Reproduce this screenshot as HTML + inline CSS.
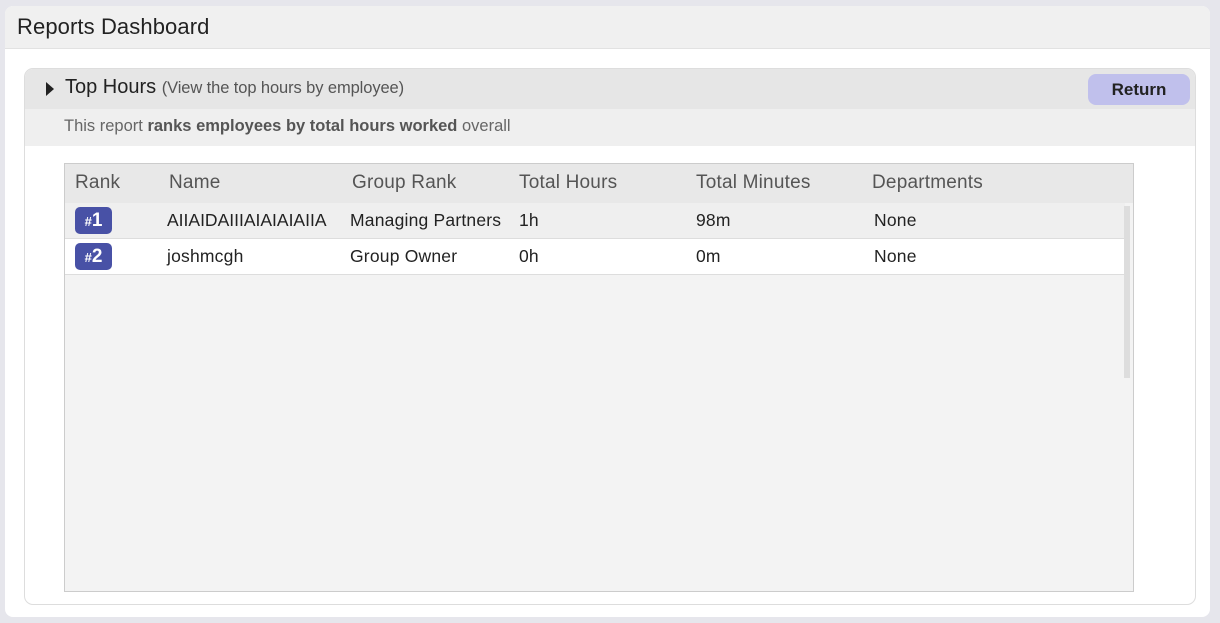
<!DOCTYPE html>
<html><head><style>
body{margin:0;width:1220px;height:623px;background:#e6e6ec;font-family:"Liberation Sans",sans-serif;position:relative;overflow:hidden}
div{box-sizing:border-box;position:absolute}
.t{white-space:nowrap}
.h{font-size:19px;color:#555;top:172px;letter-spacing:0.2px}
.d{font-size:17.5px;color:#222;letter-spacing:0.2px}
</style></head><body>
<div style="left:5px;top:6px;width:1205px;height:611px;background:#fff;border-radius:8px"></div>
<div style="left:5px;top:6px;width:1205px;height:43px;background:#f0f0f0;border-radius:8px 8px 0 0;border-bottom:1px solid #e2e2e2"></div>
<div class="t" style="left:17px;top:14px;font-size:22px;color:#222;letter-spacing:0.1px">Reports Dashboard</div>
<div style="left:24px;top:68px;width:1172px;height:537px;border:1px solid #ddd;border-radius:9px;background:#fff;overflow:hidden">
 <div style="left:0;top:0;width:1172px;height:40px;background:#e6e6e6"></div>
 <div style="left:0;top:40px;width:1172px;height:37px;background:#efefef"></div>
</div>
<svg style="position:absolute;left:45px;top:81px" width="10" height="16"><path d="M1 1 L9 8 L1 15Z" fill="#222"/></svg>
<div class="t" style="left:65px;top:76px;font-size:20px;color:#222">Top Hours <span style="font-size:16.5px;color:#555;letter-spacing:-0.1px">(View the top hours by employee)</span></div>
<div class="t" style="left:1088px;top:74px;width:102px;height:31px;background:#c0c0ec;border-radius:8px;text-align:center;line-height:31px;font-size:17px;color:#222;font-weight:bold">Return</div>
<div class="t" style="left:64px;top:117px;font-size:16.5px;color:#666;letter-spacing:0px">This report <b style="color:#555">ranks employees by total hours worked</b> overall</div>
<div style="left:64px;top:163px;width:1070px;height:429px;border:1px solid #ccc;background:#f3f3f3">
 <div style="left:0;top:0;width:1068px;height:39px;background:#e8e8e8"></div>
 <div style="left:0;top:39px;width:1060px;height:36px;background:#efefef;border-bottom:1px solid #ddd"></div>
 <div style="left:0;top:75px;width:1060px;height:36px;background:#fff;border-bottom:1px solid #ddd"></div>
 <div style="left:1059px;top:42px;width:6px;height:172px;background:#ddd"></div>
</div>
<div class="t h" style="left:75px">Rank</div>
<div class="t h" style="left:169px">Name</div>
<div class="t h" style="left:352px">Group Rank</div>
<div class="t h" style="left:519px">Total Hours</div>
<div class="t h" style="left:696px">Total Minutes</div>
<div class="t h" style="left:872px">Departments</div>
<div class="t" style="left:75px;top:207px;width:37px;height:27px;background:#4851a6;border-radius:5px;color:#fff;text-align:center;line-height:27px;font-size:19px;font-weight:bold"><span style="font-size:13px">#</span>1</div>
<div class="t" style="left:75px;top:243px;width:37px;height:27px;background:#4851a6;border-radius:5px;color:#fff;text-align:center;line-height:27px;font-size:19px;font-weight:bold"><span style="font-size:13px">#</span>2</div>
<div class="t d" style="left:167px;top:210px;letter-spacing:0">AIIAIDAIIIAIAIAIAIIA</div>
<div class="t d" style="left:350px;top:210px">Managing Partners</div>
<div class="t d" style="left:519px;top:210px">1h</div>
<div class="t d" style="left:696px;top:210px">98m</div>
<div class="t d" style="left:874px;top:210px">None</div>
<div class="t d" style="left:167px;top:246px">joshmcgh</div>
<div class="t d" style="left:350px;top:246px">Group Owner</div>
<div class="t d" style="left:519px;top:246px">0h</div>
<div class="t d" style="left:696px;top:246px">0m</div>
<div class="t d" style="left:874px;top:246px">None</div>
</body></html>
